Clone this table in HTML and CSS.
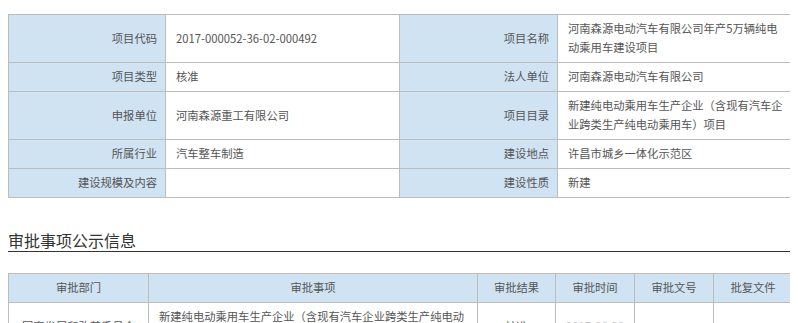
FILE: index.html
```html
<!DOCTYPE html>
<html lang="zh-CN">
<head>
<meta charset="utf-8">
<title>项目信息</title>
<link rel="stylesheet" href="styles.css">
</head>
<body>
<table class="info">
  <colgroup>
    <col class="c-label"><col class="c-value"><col class="c-label2"><col class="c-value2">
  </colgroup>
  <tr>
    <th>项目代码</th>
    <td>2017-000052-36-02-000492</td>
    <th>项目名称</th>
    <td>河南森源电动汽车有限公司年产5万辆纯电<br>动乘用车建设项目</td>
  </tr>
  <tr>
    <th>项目类型</th>
    <td>核准</td>
    <th>法人单位</th>
    <td>河南森源电动汽车有限公司</td>
  </tr>
  <tr>
    <th>申报单位</th>
    <td>河南森源重工有限公司</td>
    <th>项目目录</th>
    <td>新建纯电动乘用车生产企业（含现有汽车企<br>业跨类生产纯电动乘用车）项目</td>
  </tr>
  <tr>
    <th>所属行业</th>
    <td>汽车整车制造</td>
    <th>建设地点</th>
    <td>许昌市城乡一体化示范区</td>
  </tr>
  <tr>
    <th>建设规模及内容</th>
    <td></td>
    <th>建设性质</th>
    <td>新建</td>
  </tr>
</table>

<h2 class="section-title">审批事项公示信息</h2>

<table class="approval">
  <colgroup>
    <col class="a1"><col class="a2"><col class="a3"><col class="a4"><col class="a5"><col class="a6">
  </colgroup>
  <tr>
    <th>审批部门</th>
    <th>审批事项</th>
    <th>审批结果</th>
    <th>审批时间</th>
    <th>审批文号</th>
    <th>批复文件</th>
  </tr>
  <tr>
    <td class="center">国家发展和改革委员会</td>
    <td>新建纯电动乘用车生产企业（含现有汽车企业跨类生产纯电动<br>乘用车）项目核准</td>
    <td class="center">核准</td>
    <td class="center faint">2017-06-30</td>
    <td class="center"></td>
    <td class="center"></td>
  </tr>
</table>
</body>
</html>
```

FILE: styles.css
```css
body {
  margin: 8px;
  background: #ffffff;
  font-family: "Noto Sans CJK SC", "Microsoft YaHei", sans-serif;
  color: #555555;
}

table {
  border-collapse: collapse;
  table-layout: fixed;
  width: 784px;
  font-size: 11.3px;
}

th, td {
  border: 1px solid #bcbcbc;
  line-height: 19px;
  padding: 4px 10px 5px 10px;
  font-weight: normal;
  color: #555555;
  vertical-align: middle;
}

.info {
  margin-top: 6px;
}

.info th {
  background: #cfe3f3;
  text-align: right;
  padding-right: 8px;
}

.info td {
  text-align: left;
  white-space: nowrap;
}

.c-label { width: 157px; }
.c-value { width: 234px; }
.c-label2 { width: 158px; }
.c-value2 { width: 235px; }

.section-title {
  margin: 32px 0 0 0;
  padding: 0 0 1px 0;
  font-size: 16px;
  line-height: 20px;
  font-weight: normal;
  color: #333333;
  border-bottom: 1px solid #333333;
  width: 784px;
}

.approval {
  margin-top: 21px;
}

.approval th {
  background: #cfe3f3;
  text-align: center;
}

.approval td {
  text-align: left;
  white-space: nowrap;
}

.approval td.center {
  text-align: center;
}

.approval td.faint {
  color: #c8c8c8;
}

.a1 { width: 140px; }
.a2 { width: 329px; }
.a3 { width: 78px; }
.a4 { width: 79px; }
.a5 { width: 79px; }
.a6 { width: 79px; }
```
